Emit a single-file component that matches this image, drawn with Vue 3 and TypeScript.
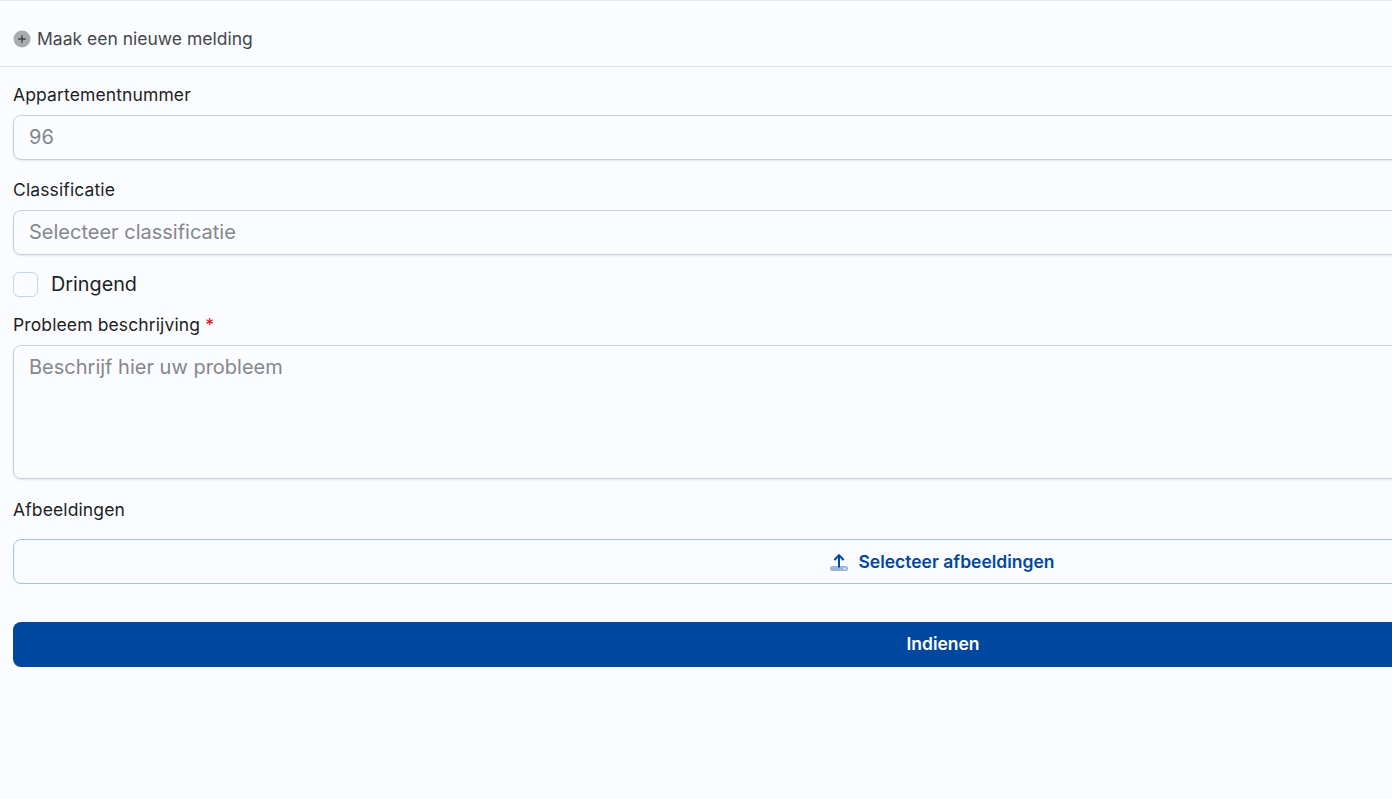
<template>
  <div class="page">
    <div class="top-bar">
      <span class="plus-icon" aria-hidden="true">
        <svg width="18" height="18" viewBox="0 0 18 18">
          <circle cx="9" cy="9" r="8.5" fill="#a9abb0" />
          <path d="M9 5.2v7.6M5.2 9h7.6" stroke="#3d4044" stroke-width="1.3" fill="none" />
        </svg>
      </span>
      <span class="top-title">Maak een nieuwe melding</span>
    </div>

    <form class="form" @submit.prevent>
      <label class="field-label first">Appartementnummer</label>
      <input class="text-input" type="text" :value="apartment" disabled />

      <label class="field-label">Classificatie</label>
      <div class="text-input select-input">Selecteer classificatie</div>

      <label class="check-row">
        <span class="check-box"></span>
        <span class="check-text">Dringend</span>
      </label>

      <label class="field-label problem-label">Probleem beschrijving <span class="required">*</span></label>
      <textarea class="text-area" placeholder="Beschrijf hier uw probleem"></textarea>

      <label class="field-label images-label">Afbeeldingen</label>
      <button class="upload-btn" type="button">
        <svg width="20" height="20" viewBox="0 0 20 20" aria-hidden="true">
          <rect x="1" y="14" width="18" height="5" rx="2.5" fill="#9db5dc" />
          <circle cx="15.6" cy="16.5" r="1" fill="#ffffff" />
          <path d="M10 15.5V3.5M5.4 8 10 3.2 14.6 8" stroke="#00489f" stroke-width="2" fill="none" />
        </svg>
        <span>Selecteer afbeeldingen</span>
      </button>

      <button class="submit-btn" type="submit">Indienen</button>
    </form>
  </div>
</template>

<script setup lang="ts">
const apartment = '96'
</script>

<style>
html,
body {
  margin: 0;
  background: #fbfcff;
  overflow: hidden;
}
</style>

<style scoped>
.page {
  width: 1392px;
  height: 799px;
  overflow: hidden;
  background: #fbfcff;
  font-family: Inter, "Liberation Sans", sans-serif;
  color: #1d1f23;
  box-sizing: border-box;
  border-top: 1px solid #e6e8ec;
}

.top-bar {
  height: 66px;
  box-sizing: border-box;
  padding: 11px 13px 0;
  display: flex;
  align-items: center;
  gap: 6px;
  font-size: 17.5px;
  color: #44474d;
  border-bottom: 1px solid #dfe1e6;
  width: 1392px;
}

.top-title {
  padding-bottom: 2px;
}

.plus-icon {
  display: flex;
  width: 18px;
  height: 18px;
}

.form {
  width: 1860px;
  margin-left: 13px;
  display: flex;
  flex-direction: column;
}

.field-label {
  display: block;
  height: 20px;
  line-height: 20px;
  font-size: 17.5px;
  font-weight: 400;
  letter-spacing: 0.12px;
  color: #1d1f23;
  margin-top: 20px;
  margin-bottom: 10px;
}

.field-label.first {
  margin-top: 18px;
  margin-bottom: 10px;
}

.text-input,
.text-area {
  box-sizing: border-box;
  width: 100%;
  border: 1px solid #c5d1e2;
  border-radius: 8px;
  background: #fbfcff;
  box-shadow: 0 1px 2px rgba(60, 80, 120, 0.12);
  font-family: inherit;
  font-size: 20px;
  color: #85878c;
  padding: 0 15px;
  outline: none;
}

.text-input {
  height: 45px;
  line-height: 43px;
  display: block;
}

.text-input:disabled {
  opacity: 1;
  -webkit-text-fill-color: #85878c;
  padding-bottom: 2px;
}

.text-area {
  height: 134px;
  padding-top: 9px;
  line-height: 24px;
  resize: none;
  display: block;
}

.text-area::placeholder {
  color: #85878c;
  opacity: 1;
}

.check-row {
  display: flex;
  align-items: center;
  gap: 13px;
  margin-top: 17px;
  font-size: 19.8px;
  color: #1d1f23;
  height: 25px;
}

.check-text {
  padding-bottom: 2px;
}

.check-box {
  box-sizing: border-box;
  width: 25px;
  height: 25px;
  border: 1px solid #c5d5ea;
  border-radius: 6px;
  background: #fbfcff;
}

.problem-label {
  margin-top: 18px;
}

.required {
  color: #d3121a;
}

.images-label {
  margin-top: 21px;
  margin-bottom: 19px;
}

.upload-btn {
  box-sizing: border-box;
  width: 100%;
  height: 45px;
  border: 1px solid #9bc3ec;
  border-radius: 8px;
  background: #fbfcff;
  color: #00489f;
  font-family: inherit;
  font-size: 17.5px;
  font-weight: 600;
  display: flex;
  align-items: center;
  justify-content: center;
  gap: 9px;
  padding: 0 2px 0 0;
}

.submit-btn {
  width: 100%;
  height: 45px;
  margin-top: 38px;
  border: none;
  border-radius: 8px;
  background: #00489f;
  color: #ffffff;
  font-family: inherit;
  font-size: 17.5px;
  font-weight: 600;
  padding: 0 0 2px;
}
</style>
